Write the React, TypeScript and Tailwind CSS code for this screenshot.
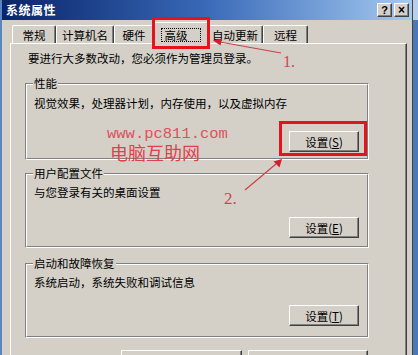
import React from "react";

const UI = "font-['Noto_Sans_CJK_SC','Noto_Sans',sans-serif]";

function Btn({ children, className = "" }: { children: React.ReactNode; className?: string }) {
  return (
    <div
      className={`shrink-0 flex items-center justify-center bg-[#d4d0c8] border border-t-white border-l-white border-r-[#404040] border-b-[#404040] shadow-[inset_-1px_-1px_0_#808080] text-[11.5px] leading-[14px] text-black ${className}`}
    >
      {children}
    </div>
  );
}

function Group({
  label,
  text,
  btn,
  boxClass,
  textClass,
  btnClass,
}: {
  label: string;
  text: string;
  btn: React.ReactNode;
  boxClass: string;
  textClass: string;
  btnClass: string;
}) {
  return (
    <div className={`relative shrink-0 w-[344px] border border-t-[#808080] border-l-[#808080] border-r-white border-b-white ${boxClass}`}>
      <div className="h-full border border-t-white border-l-white border-r-[#808080] border-b-[#808080] flex flex-col pl-[7px] pr-[8px]">
        <div className={`shrink-0 text-[11.5px] leading-[14px] text-black ${textClass}`}>{text}</div>
        <Btn className={`self-end w-[70px] h-[21px] ${btnClass}`}>{btn}</Btn>
      </div>
      <div className="absolute left-[7px] -top-[8px] bg-[#d4d0c8] px-[1px] text-[11.5px] leading-[14px] text-black">
        {label}
      </div>
    </div>
  );
}

function Tab({ label, w }: { label: string; w: string }) {
  return (
    <div
      className={`shrink-0 h-[18px] ${w} flex items-center justify-center bg-[#d4d0c8] border-t border-l border-t-white border-l-white border-r border-r-[#404040] shadow-[inset_-1px_0_0_#808080] rounded-tl-[2px] rounded-tr-[2px] text-[11.5px] leading-[14px] text-black`}
    >
      {label}
    </div>
  );
}

export default function App() {
  return (
    <div className={`relative w-[418px] h-[355px] overflow-hidden flex bg-[#3a6ea5] ${UI}`}>
      <div className="w-[2px] shrink-0 bg-[#5a86c0]" />
      <div className="w-[411px] shrink-0 h-[355px] overflow-hidden bg-[#d4d0c8] border-r border-r-[#404040] flex flex-col">
        {/* title bar */}
        <div className="shrink-0 h-[20px] flex items-center justify-between bg-linear-to-r from-[#0a246a] via-[#3a6ab8] to-[#a6caf0] pl-[4px] pr-[3px]">
          <span className="text-white font-bold text-[12px] leading-[14px] tracking-[0.5px]">系统属性</span>
          <div className="flex gap-[2px]">
            <div className="w-[15px] h-[14px] flex items-center justify-center bg-[#d4d0c8] border border-t-white border-l-white border-r-[#404040] border-b-[#404040] shadow-[inset_-1px_-1px_0_#808080] text-[11px] font-bold leading-none text-black font-['Liberation_Sans',sans-serif]">
              ?
            </div>
            <div className="w-[15px] h-[14px] flex items-center justify-center bg-[#d4d0c8] border border-t-white border-l-white border-r-[#404040] border-b-[#404040] shadow-[inset_-1px_-1px_0_#808080] text-[12px] font-bold leading-none text-black font-['Liberation_Sans',sans-serif]">
              ×
            </div>
          </div>
        </div>

        {/* body */}
        <div className="shrink-0 flex flex-col pl-[8px] pr-[5px]">
          {/* tabs */}
          <div className="shrink-0 mt-[2px] h-[21px] flex items-end pl-[2px]">
            <Tab label="常规" w="w-[44px]" />
            <Tab label="计算机名" w="w-[58px]" />
            <Tab label="硬件" w="w-[40px]" />
            <div className="shrink-0 relative z-10 -mx-[2px] -mb-[1px] h-[22px] w-[57px] flex items-start justify-center pt-[5px] bg-[#d4d0c8] border-t border-l border-t-white border-l-white border-r border-r-[#404040] shadow-[inset_-1px_0_0_#808080] rounded-tl-[2px] rounded-tr-[2px]">
              <div className="border border-dotted border-black px-[3px] pr-[12px] h-[14px] flex items-center text-[11.5px] leading-[12px] text-black">
                高级
              </div>
            </div>
            <Tab label="自动更新" w="w-[56px]" />
            <Tab label="远程" w="w-[45px]" />
          </div>

          {/* panel */}
          <div className="shrink-0 h-[330px] border-t border-l border-t-white border-l-white border-r border-r-[#404040] shadow-[inset_-1px_0_0_#808080] pt-[7px] pl-[14px] flex flex-col">
            <div className="shrink-0 ml-[3px] text-[11.5px] leading-[14px] text-black">要进行大多数改动，您必须作为管理员登录。</div>

            <Group
              label="性能"
              text="视觉效果，处理器计划，内存使用，以及虚拟内存"
              btn={
                <span>
                  设置(<u>S</u>)
                </span>
              }
              boxClass="mt-[18px] h-[77px]"
              textClass="mt-[11px]"
              btnClass="mt-[21px]"
            />
            <Group
              label="用户配置文件"
              text="与您登录有关的桌面设置"
              btn={
                <span>
                  设置(<u>E</u>)
                </span>
              }
              boxClass="mt-[13px] h-[75px]"
              textClass="mt-[10px]"
              btnClass="mt-[18px]"
            />
            <Group
              label="启动和故障恢复"
              text="系统启动，系统失败和调试信息"
              btn={
                <span>
                  设置(<u>T</u>)
                </span>
              }
              boxClass="mt-[15px] h-[75px]"
              textClass="mt-[10px]"
              btnClass="mt-[16px]"
            />

            <div className="shrink-0 w-[344px] mt-[12px] flex justify-end gap-[6px] pr-[1px]">
              <Btn className="w-[121px] h-[23px]">
                <span>
                  环境变量(<u>N</u>)
                </span>
              </Btn>
              <Btn className="w-[120px] h-[23px]">
                <span>
                  错误报告(<u>R</u>)
                </span>
              </Btn>
            </div>
          </div>
        </div>
      </div>
      <div className="flex-1 flex flex-col">
        <div className="h-[20px] shrink-0 bg-[#b8d0ee]" />
        <div className="flex-1 bg-[#4a78b8]" />
      </div>

      {/* annotations */}
      <div className="absolute z-20 left-[152px] top-[17px] w-[58px] h-[32px] border-[3px] border-[#e5141c] pointer-events-none" />
      <div className="absolute z-20 left-[279px] top-[121px] w-[88px] h-[35px] border-[3px] border-[#e5141c] pointer-events-none" />

      <div className="absolute z-20 left-[107px] top-[127px] text-[15.5px] leading-[14px] text-[#e0505c] font-['Liberation_Mono',monospace] pointer-events-none">
        www.pc811.com
      </div>
      <div className="absolute z-20 left-[110px] top-[144px] text-[18px] leading-[16px] text-[#e0404e] pointer-events-none">
        电脑互助网
      </div>

      <div className="absolute z-20 left-[283px] top-[53px] text-[16px] leading-[18px] text-[#d04452] font-['Liberation_Serif',serif] pointer-events-none">
        1.
      </div>
      <div className="absolute z-20 left-[224px] top-[189px] text-[17px] leading-[20px] text-[#d04452] font-['Liberation_Serif',serif] pointer-events-none">
        2.
      </div>

      <svg className="absolute z-20 left-0 top-0 pointer-events-none" width="418" height="355" viewBox="0 0 418 355">
        <line x1="281" y1="53" x2="220" y2="42" stroke="#c8404c" strokeWidth="1.2" />
        <polygon points="213,40.5 222,38.5 220.5,45.5" fill="#d02030" />
        <line x1="245" y1="190" x2="276" y2="164" stroke="#c8404c" strokeWidth="1.2" />
        <polygon points="282,159 279.5,167.5 273.5,161.5" fill="#d02030" />
      </svg>
    </div>
  );
}
